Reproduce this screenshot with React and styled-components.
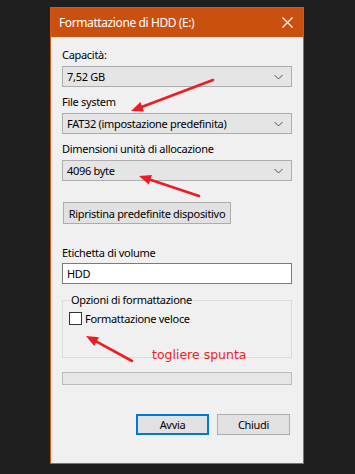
import styled, { createGlobalStyle } from 'styled-components';

const GlobalStyle = createGlobalStyle`
  html, body {
    margin: 0;
    padding: 0;
    background: #1f1f1f;
  }
  body {
    width: 355px;
    height: 474px;
    overflow: hidden;
    font-family: "Noto Sans", "Open Sans", sans-serif;
    font-size: 11px;
    letter-spacing: -0.3px;
    color: #000;
  }
`;

const Page = styled.div`
  position: relative;
  width: 355px;
  height: 474px;
  padding: 7px 0 0 50px;
  box-sizing: border-box;
`;

const Dialog = styled.div`
  width: 254px;
  height: 457px;
  box-sizing: border-box;
  border: 1px solid #d4581a;
  background: #f0f0f0;
  display: flex;
  flex-direction: column;
`;

const TitleBar = styled.div`
  height: 29px;
  background: #ca5010;
  color: #fff;
  display: flex;
  align-items: center;
  justify-content: space-between;
  padding: 0 10px 0 8px;
  font-size: 12px;
  letter-spacing: -0.4px;
`;

const Body = styled.div`
  flex: 1;
  padding: 10px 11px 0 11px;
  display: flex;
  flex-direction: column;
`;

const Label = styled.div`
  line-height: 16px;
  height: 16px;
  margin-top: ${(p) => p.$top || 0}px;
  margin-bottom: ${(p) => (p.$gap == null ? 3 : p.$gap)}px;
  white-space: nowrap;
`;

const Combo = styled.div`
  height: 21px;
  box-sizing: border-box;
  border: 1px solid #adadad;
  background: #e5e5e5;
  display: flex;
  align-items: center;
  justify-content: space-between;
  padding: 0 8px 0 4px;
`;

const PushButton = styled.div`
  align-self: flex-start;
  height: 22px;
  box-sizing: border-box;
  border: 1px solid #adadad;
  background: #e1e1e1;
  display: flex;
  align-items: center;
  justify-content: center;
  white-space: nowrap;
  width: ${(p) => p.$width}px;
  margin-top: ${(p) => p.$top || 0}px;
  margin-left: 1px;
`;

const DialogButton = styled(PushButton)`
  width: 73px;
  height: 21px;
  margin: 0;
  border: ${(p) => (p.$default ? '2px solid #0078d7' : '1px solid #adadad')};
`;

const TextInput = styled.div`
  height: 21px;
  box-sizing: border-box;
  border: 1px solid #7a7a7a;
  background: #fff;
  display: flex;
  align-items: center;
  padding: 0 4px;
`;

const Group = styled.fieldset`
  margin: 8px 0 0 0;
  padding: 0 0 0 6px;
  height: 66px;
  box-sizing: border-box;
  border: 1px solid #dcdcdc;
  min-width: 0;
`;

const Legend = styled.legend`
  padding: 0 1px;
  margin-left: 1px;
  line-height: 16px;
`;

const CheckRow = styled.label`
  display: flex;
  align-items: center;
  gap: 3px;
  margin-top: 3px;
`;

const CheckBox = styled.span`
  width: 13px;
  height: 13px;
  box-sizing: border-box;
  border: 1px solid #333;
  background: #fff;
`;

const Progress = styled.div`
  height: 13px;
  box-sizing: border-box;
  border: 1px solid #bcbcbc;
  background: #e6e6e6;
  margin-top: 14px;
`;

const ButtonRow = styled.div`
  display: flex;
  justify-content: flex-end;
  gap: 8px;
  margin-top: 29px;
  padding-right: 2px;
`;

const Note = styled.div`
  position: absolute;
  left: 152px;
  top: 347px;
  color: #ee1c25;
  font-family: "DejaVu Sans", sans-serif;
  font-size: 12.5px;
  letter-spacing: 0;
  line-height: 16px;
`;

const Overlay = styled.svg`
  position: absolute;
  left: 0;
  top: 0;
  pointer-events: none;
`;

const Chevron = () => (
  <svg width="9" height="6" viewBox="0 0 9 6">
    <path d="M0.5 1 L4.5 5 L8.5 1" fill="none" stroke="#555" strokeWidth="1" />
  </svg>
);

const CloseIcon = () => (
  <svg width="11" height="11" viewBox="0 0 11 11">
    <path d="M0.5 0.5 L10.5 10.5 M10.5 0.5 L0.5 10.5" stroke="#fff" strokeWidth="1.2" />
  </svg>
);

// red annotation arrows: tail -> tip
const arrows = [
  { x1: 213, y1: 80, x2: 131, y2: 111 },
  { x1: 199, y1: 196, x2: 139, y2: 176 },
  { x1: 132, y1: 361, x2: 86, y2: 336 },
];

const Arrow = ({ x1, y1, x2, y2 }) => {
  const a = Math.atan2(y2 - y1, x2 - x1);
  const len = 12;
  const w = 5;
  const bx = x2 - len * Math.cos(a);
  const by = y2 - len * Math.sin(a);
  const px = -Math.sin(a) * w;
  const py = Math.cos(a) * w;
  return (
    <g>
      <line x1={x1} y1={y1} x2={bx} y2={by} stroke="#ec1c24" strokeWidth="2.6" strokeLinecap="round" />
      <polygon points={`${x2},${y2} ${bx + px},${by + py} ${bx - px},${by - py}`} fill="#ec1c24" />
    </g>
  );
};

const App = () => {
  return (
    <Page>
      <GlobalStyle />
      <Dialog>
        <TitleBar>
          <span>Formattazione di HDD (E:)</span>
          <CloseIcon />
        </TitleBar>
        <Body>
          <Label>Capacità:</Label>
          <Combo>
            <span>7,52 GB</span>
            <Chevron />
          </Combo>

          <Label $top={7}>File system</Label>
          <Combo>
            <span>FAT32 (impostazione predefinita)</span>
            <Chevron />
          </Combo>

          <Label $top={7}>Dimensioni unità di allocazione</Label>
          <Combo>
            <span>4096 byte</span>
            <Chevron />
          </Combo>

          <PushButton $width={168} $top={21}>Ripristina predefinite dispositivo</PushButton>

          <Label $top={21} $gap={2}>Etichetta di volume</Label>
          <TextInput>HDD</TextInput>

          <Group>
            <Legend>Opzioni di formattazione</Legend>
            <CheckRow>
              <CheckBox />
              <span>Formattazione veloce</span>
            </CheckRow>
          </Group>

          <Progress />

          <ButtonRow>
            <DialogButton $default>Avvia</DialogButton>
            <DialogButton>Chiudi</DialogButton>
          </ButtonRow>
        </Body>
      </Dialog>

      <Note>togliere spunta</Note>
      <Overlay width="355" height="474">
        {arrows.map((a, i) => (
          <Arrow key={i} {...a} />
        ))}
      </Overlay>
    </Page>
  );
};

export default App;
